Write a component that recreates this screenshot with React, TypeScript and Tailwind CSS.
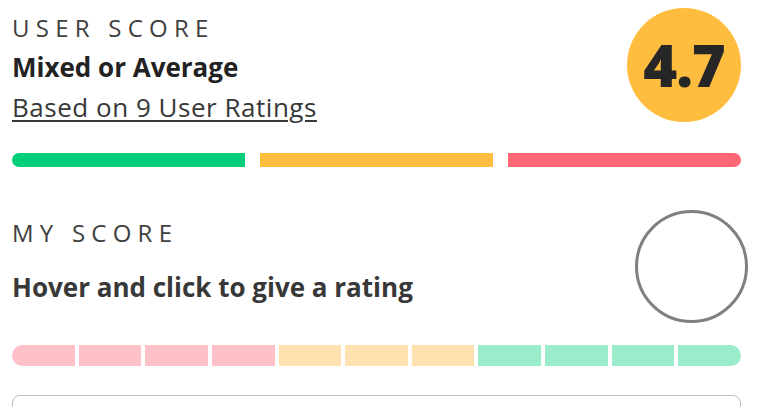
import React from "react";

const segs = [
  "bg-[#ffc1c8] rounded-l-full",
  "bg-[#ffc1c8]",
  "bg-[#ffc1c8]",
  "bg-[#ffc1c8]",
  "bg-[#ffe2b0]",
  "bg-[#ffe2b0]",
  "bg-[#ffe2b0]",
  "bg-[#9beccb]",
  "bg-[#9beccb]",
  "bg-[#9beccb]",
  "bg-[#9beccb] rounded-r-full",
];

export default function App() {
  return (
    <div className="w-[780px] h-[407px] bg-white overflow-hidden font-['Open_Sans',sans-serif] text-[#262626]">
      <div className="ml-[12px] w-[729px]">
        <div className="flex justify-between items-start">
          <div className="pt-[9px]">
            <div className="text-[24px] leading-[38px] tracking-[0.26em] uppercase text-[#404040]">User Score</div>
            <div className="text-[26px] leading-[40px] font-bold text-[#222222]">Mixed or Average</div>
            <div className="text-[26px] leading-[40px] tracking-[0.02em] underline underline-offset-[3px] decoration-[2px] text-[#383838]">Based on 9 User Ratings</div>
          </div>
          <div className="mt-[8px] w-[114px] h-[114px] rounded-full bg-[#ffbd3f] flex items-center justify-center text-[58px] font-extrabold tracking-[-0.02em] leading-none text-[#262626]">
            4.7
          </div>
        </div>
        <div className="mt-[26px] flex gap-[15px] h-[14px]">
          <div className="flex-1 bg-[#00ce7a] rounded-l-full" />
          <div className="flex-1 bg-[#ffbd3f]" />
          <div className="flex-1 bg-[#ff6874] rounded-r-full" />
        </div>
        <div className="mt-[43px] flex justify-between items-start">
          <div className="pt-[3px]">
            <div className="text-[24px] leading-[40px] tracking-[0.26em] uppercase text-[#404040]">My Score</div>
            <div className="mt-[14px] text-[26px] leading-[40px] font-bold text-[#383838]">Hover and click to give a rating</div>
          </div>
          <div className="mr-[-7px] w-[113px] h-[113px] rounded-full border-[3px] border-[#808080]" />
        </div>
        <div className="mt-[22px] flex gap-[4px] h-[21px]">
          {segs.map((c, i) => (
            <div key={i} className={"flex-1 " + c} />
          ))}
        </div>
        <div className="mt-[29px] h-[60px] rounded-[8px] border border-[#bdbdbd]" />
      </div>
    </div>
  );
}
